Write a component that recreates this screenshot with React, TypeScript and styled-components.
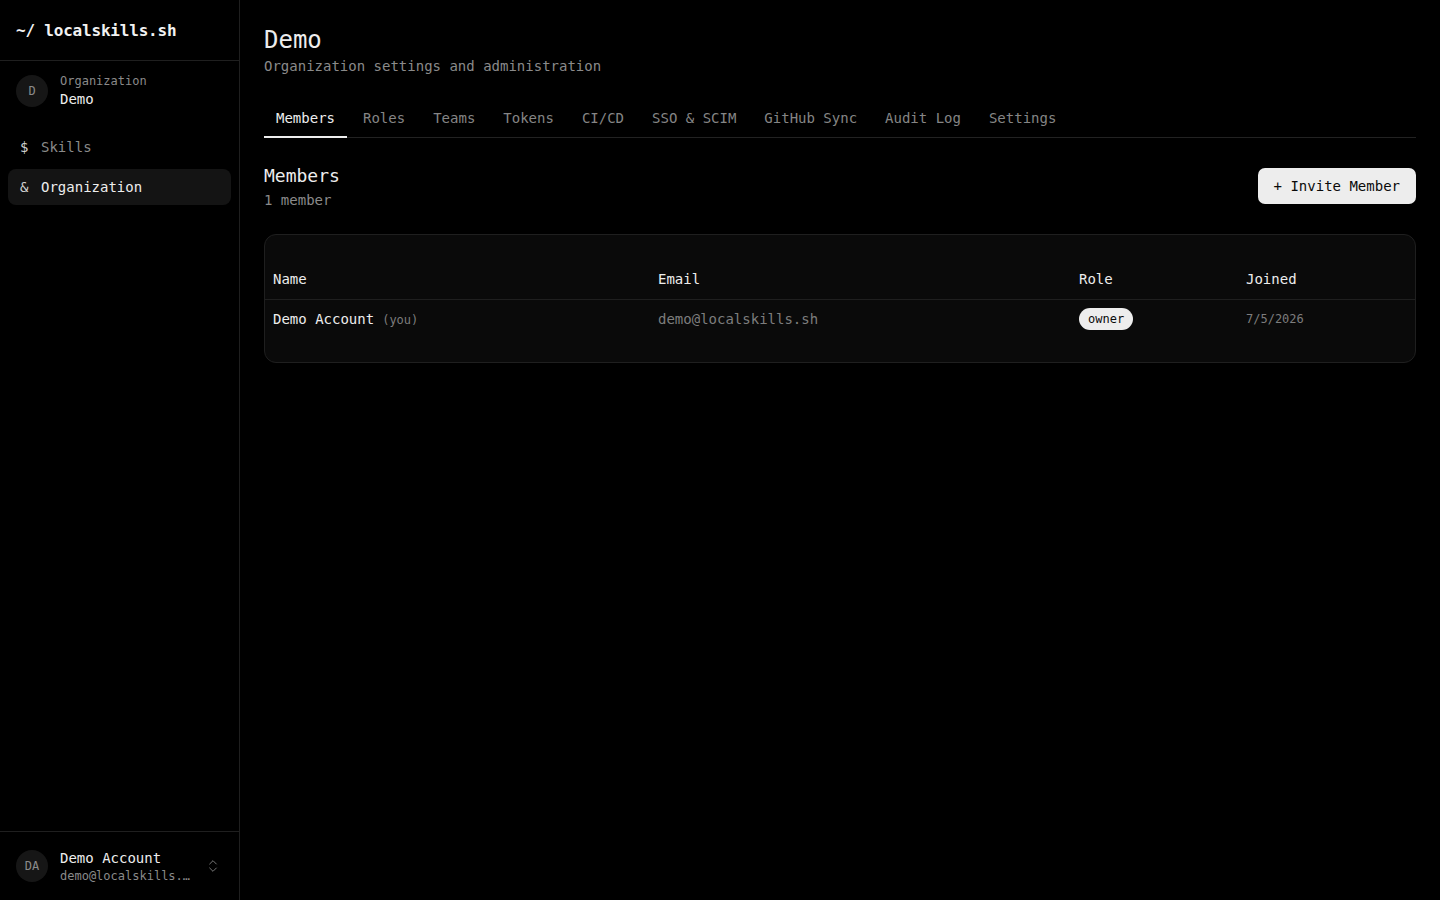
import React from "react";
import styled, { createGlobalStyle } from "styled-components";
import { ChevronsUpDown } from "lucide-react";

const Global = createGlobalStyle`
  html, body { margin: 0; padding: 0; background: #000; }
  body { font-family: "DejaVu Sans Mono", "Liberation Mono", monospace; color: #ededed; }
  * { box-sizing: border-box; }
`;

const Shell = styled.div`
  display: flex;
  width: 100%;
  height: 900px;
  background: #000;
`;

const Sidebar = styled.aside`
  width: 240px;
  flex: none;
  display: flex;
  flex-direction: column;
  border-right: 1px solid #1f1f1f;
`;

const Brand = styled.div`
  height: 61px;
  display: flex;
  align-items: center;
  padding: 0 16px;
  border-bottom: 1px solid #1f1f1f;
  font-size: 16px;
  font-weight: 700;
  color: #f2f2f2;
  letter-spacing: -0.2px;
`;

const OrgSwitch = styled.div`
  display: flex;
  align-items: center;
  gap: 12px;
  padding: 12px 16px;
`;

const Avatar = styled.div`
  width: 32px;
  height: 32px;
  border-radius: 50%;
  background: #161616;
  color: #8a8a8a;
  font-size: 12px;
  display: flex;
  align-items: center;
  justify-content: center;
  flex: none;
`;

const Stack = styled.div`
  display: flex;
  flex-direction: column;
  min-width: 0;
  flex: 1;
`;

const Caption = styled.span`
  font-size: 12px;
  line-height: 16px;
  color: #8a8a8a;
  white-space: nowrap;
  overflow: hidden;
  text-overflow: ellipsis;
`;

const Strong = styled.span`
  font-size: 14px;
  line-height: 20px;
  color: #ededed;
  font-weight: 500;
`;

const Nav = styled.nav`
  display: flex;
  flex-direction: column;
  gap: 4px;
  padding: 8px 8px;
  flex: 1;
`;

const NavItem = styled.div<{ $active?: boolean }>`
  height: 36px;
  display: flex;
  align-items: center;
  padding: 0 12px;
  border-radius: 8px;
  font-size: 14px;
  background: ${(p) => (p.$active ? "#141414" : "transparent")};
  color: ${(p) => (p.$active ? "#ededed" : "#8a8a8a")};
`;

const NavIcon = styled.span`
  width: 21px;
  color: #d0d0d0;
`;

const UserBar = styled.div`
  height: 69px;
  border-top: 1px solid #1f1f1f;
  display: flex;
  align-items: center;
  gap: 12px;
  padding: 0 18px 0 16px;
`;

const Chevron = styled.span`
  color: #777;
  display: flex;
`;

const Main = styled.main`
  flex: 1;
  padding: 24px 24px;
  min-width: 0;
`;

const Title = styled.h1`
  margin: 0;
  font-size: 24px;
  line-height: 32px;
  font-weight: 500;
  color: #ededed;
`;

const Subtitle = styled.p`
  margin: 0;
  font-size: 14px;
  line-height: 20px;
  color: #8a8a8a;
`;

const Tabs = styled.div`
  margin-top: 24px;
  display: flex;
  gap: 4px;
  border-bottom: 1px solid #222;
  height: 38px;
`;

const Tab = styled.div<{ $active?: boolean }>`
  padding: 8px 12px;
  font-size: 14px;
  line-height: 20px;
  height: 38px;
  color: ${(p) => (p.$active ? "#ededed" : "#858585")};
  border-bottom: 2px solid ${(p) => (p.$active ? "#ededed" : "transparent")};
  margin-bottom: -1px;
`;

const SectionHead = styled.div`
  margin-top: 24px;
  display: flex;
  align-items: center;
  justify-content: space-between;
`;

const SectionTitle = styled.h2`
  margin: 0;
  font-size: 18px;
  line-height: 28px;
  font-weight: 500;
  color: #ededed;
`;

const Button = styled.button`
  height: 36px;
  padding: 0 16px;
  border: none;
  border-radius: 7px;
  background: #ededed;
  color: #0a0a0a;
  font-family: inherit;
  font-size: 14px;
  font-weight: 500;
`;

const Card = styled.div`
  margin-top: 24px;
  border: 1px solid #1f1f1f;
  border-radius: 12px;
  background: #0a0a0a;
  padding: 24px 0;
`;

const Table = styled.table`
  width: 100%;
  border-collapse: collapse;
  table-layout: fixed;
`;

const Th = styled.th<{ $w: number }>`
  width: ${(p) => p.$w}px;
  height: 40px;
  padding: 0 8px;
  text-align: left;
  font-size: 14px;
  font-weight: 500;
  color: #ededed;
  border-bottom: 1px solid #1f1f1f;
`;

const Td = styled.td<{ $muted?: boolean; $small?: boolean }>`
  padding: 8px 8px;
  height: 38px;
  font-size: ${(p) => (p.$small ? "12px" : "14px")};
  color: ${(p) => (p.$muted ? "#7d7d7d" : "#ededed")};
  white-space: nowrap;
`;

const You = styled.span`
  font-size: 12px;
  color: #7d7d7d;
  margin-left: 8px;
`;

const Badge = styled.span`
  display: inline-flex;
  align-items: center;
  height: 22px;
  padding: 0 9px;
  border-radius: 999px;
  background: #ededed;
  color: #0a0a0a;
  font-size: 12px;
  font-weight: 500;
`;

const tabs = ["Members", "Roles", "Teams", "Tokens", "CI/CD", "SSO & SCIM", "GitHub Sync", "Audit Log", "Settings"];

export default function App() {
  return (
    <>
      <Global />
      <Shell>
        <Sidebar>
          <Brand>~/ localskills.sh</Brand>
          <OrgSwitch>
            <Avatar>D</Avatar>
            <Stack>
              <Caption>Organization</Caption>
              <Strong>Demo</Strong>
            </Stack>
          </OrgSwitch>
          <Nav>
            <NavItem>
              <NavIcon>$</NavIcon>Skills
            </NavItem>
            <NavItem $active>
              <NavIcon>&amp;</NavIcon>Organization
            </NavItem>
          </Nav>
          <UserBar>
            <Avatar>DA</Avatar>
            <Stack>
              <Strong>Demo Account</Strong>
              <Caption>demo@localskills.sh</Caption>
            </Stack>
            <Chevron>
              <ChevronsUpDown size={16} strokeWidth={1.5} />
            </Chevron>
          </UserBar>
        </Sidebar>
        <Main>
          <Title>Demo</Title>
          <Subtitle>Organization settings and administration</Subtitle>
          <Tabs>
            {tabs.map((t, i) => (
              <Tab key={t} $active={i === 0}>
                {t}
              </Tab>
            ))}
          </Tabs>
          <SectionHead>
            <div>
              <SectionTitle>Members</SectionTitle>
              <Subtitle>1 member</Subtitle>
            </div>
            <Button>+ Invite Member</Button>
          </SectionHead>
          <Card>
            <Table>
              <thead>
                <tr>
                  <Th $w={385}>Name</Th>
                  <Th $w={421}>Email</Th>
                  <Th $w={167}>Role</Th>
                  <Th $w={177}>Joined</Th>
                </tr>
              </thead>
              <tbody>
                <tr>
                  <Td>
                    Demo Account<You>(you)</You>
                  </Td>
                  <Td $muted>demo@localskills.sh</Td>
                  <Td>
                    <Badge>owner</Badge>
                  </Td>
                  <Td $muted $small>
                    7/5/2026
                  </Td>
                </tr>
              </tbody>
            </Table>
          </Card>
        </Main>
      </Shell>
    </>
  );
}
